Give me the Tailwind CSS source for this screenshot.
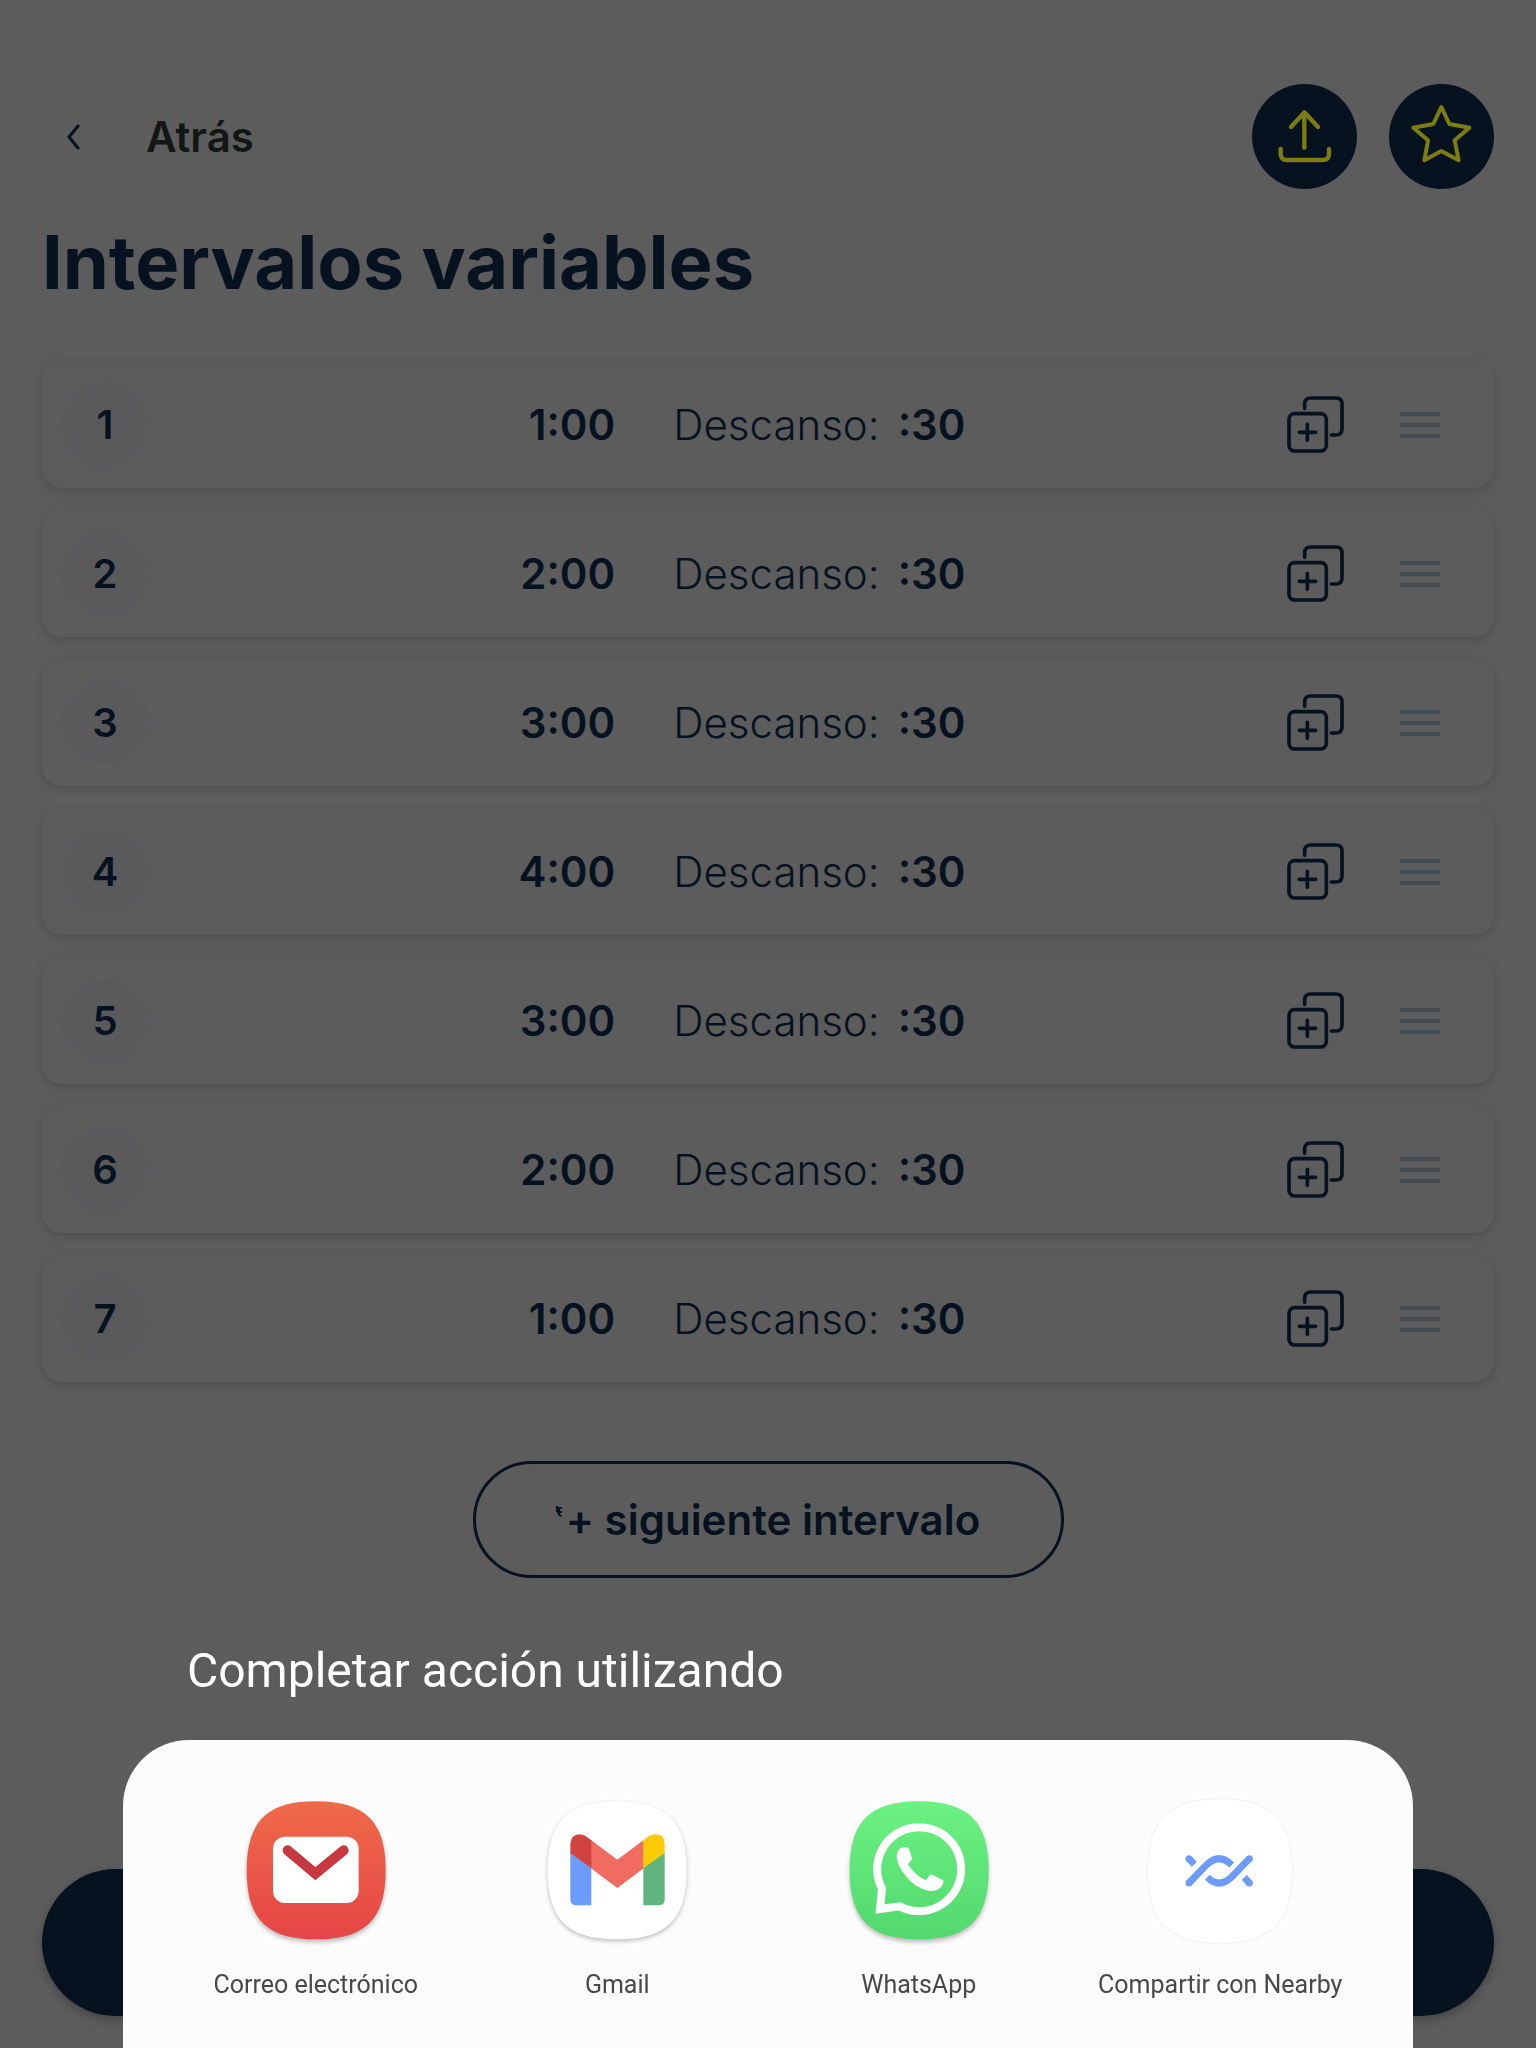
<!DOCTYPE html>
<html lang="es">
<head>
  <meta charset="UTF-8">
  <meta name="viewport" content="width=device-width, initial-scale=1.0">
  <title>Intervalos variables</title>
  <script src="https://cdn.jsdelivr.net/npm/@tailwindcss/browser@4"></script>
</head>
<body class="bg-[#5c5c5c] text-[#06121f] font-['Inter',sans-serif]">

  <main class="min-h-screen flex flex-col px-[42px] pt-[84px] pb-8">
    <!-- Top bar -->
    <header class="flex items-center justify-between">
      <a href="#" class="flex items-center gap-[66px] pl-6 text-[42px] leading-[50px] font-semibold text-[#121715]">
        <svg class="w-[14px] h-[26px]" viewBox="0 0 14 26" fill="none" stroke="#06121f" stroke-width="3" stroke-linecap="round" stroke-linejoin="round"><path d="M12 2L3 13l9 11"/></svg>
        Atrás
      </a>
      <div class="flex gap-8">
        <button type="button" aria-label="Compartir" class="size-[105px] rounded-full bg-[#06121f]">
          <svg class="size-full" viewBox="156 72 315 315" fill="none" stroke="#7c7d0e" stroke-width="13" stroke-linecap="round" stroke-linejoin="round"><path d="M313 157V263M273 201l40-44 41 44M242 267v14q0 19 19 19h107q19 0 19-19v-14"/></svg>
        </button>
        <button type="button" aria-label="Favorito" class="size-[105px] rounded-full bg-[#06121f]">
          <svg class="size-full" viewBox="567 72 315 315" fill="none" stroke="#7c7d0e" stroke-width="12" stroke-linejoin="round"><path d="M724 141l24 51 60 11-44 38 12 60-52-28-51 28 11-60-44-38 60-11z"/></svg>
        </button>
      </div>
    </header>

    <h1 class="mt-[29px] text-[74px] leading-[88px] font-bold">Intervalos variables</h1>

    <!-- Interval rows, filled by the script below -->
    <ol id="intervals" class="mt-[55px] flex flex-col gap-[22px]"></ol>

    <button type="button" class="mt-[79px] self-center flex items-center justify-center gap-1 w-[591px] h-[117px] rounded-full border-3 border-[#06121f] text-[42px] leading-[50px] font-semibold">
      <svg class="w-[6px] h-[12px] -translate-y-2" viewBox="0 0 6 12" fill="#06121f"><path d="M0 0h2v1h4v2H4v2h2v2H4q0 2 2 3v1Q1 10 1 6H0z"/></svg>
      + siguiente intervalo
    </button>

    <button type="button" aria-label="Empezar" class="mt-auto h-[147px] w-full rounded-full bg-[#06121f] shadow-[0_4px_10px_rgba(0,0,0,0.25)]"></button>
  </main>

  <!-- Share sheet -->
  <section role="dialog" aria-labelledby="sheet-title" class="fixed bottom-0 inset-x-0 px-[123px] font-['Roboto',sans-serif]">
    <h2 id="sheet-title" class="pl-16 mb-[39px] text-[48px] leading-[60px] text-white">Completar acción utilizando</h2>
    <div class="grid grid-cols-4 h-[308px] px-[42px] pt-[58px] rounded-t-[66px] bg-[#fcfcfc] text-[25px] leading-8 text-[#484848]">
      <button type="button" class="flex flex-col items-center gap-[25px] self-start">
        <svg class="size-[146px] drop-shadow-[0_3px_2px_rgba(0,0,0,0.25)]" viewBox="67 53 438 438">
          <defs><linearGradient id="mail-bg" x2="0" y2="1"><stop stop-color="#ef6a49"/><stop offset="1" stop-color="#e54546"/></linearGradient></defs>
          <path fill="url(#mail-bg)" d="M78 270C78 123 139 63 286 63S495 123 495 270 434 477 286 477 78 417 78 270z"/>
          <rect x="157" y="169" width="257" height="199" rx="36" fill="#fff"/>
          <path d="M201 210l83 70 85-70" fill="none" stroke="#c8393f" stroke-width="30" stroke-linecap="round"/>
        </svg>
        Correo electrónico
      </button>
      <button type="button" class="flex flex-col items-center gap-[25px] self-start">
        <svg class="size-[146px] drop-shadow-[0_2px_2px_rgba(0,0,0,0.25)]" viewBox="71 53 438 438">
          <path fill="#fff" d="M82 270C82 123 143 63 290 63S499 123 499 270 438 477 290 477 82 417 82 270z"/>
          <path fill="#6c9bfb" d="M150 216l63 46v113h-45q-18 0-18-18z"/>
          <path fill="#5fb57b" d="M369 262l64-46v141q0 18-18 18h-46z"/>
          <path fill="#f16b60" d="M212 179l79 59 79-59v85l-79 59-79-59z"/>
          <path fill="#d0433f" d="M150 218v-28q2-28 30-28 12 1 23 10l10 8v84z"/>
          <path fill="#fdcb04" d="M369 180l14-11q11-7 22-7 28 0 28 28v28l-64 46z"/>
        </svg>
        Gmail
      </button>
      <button type="button" class="flex flex-col items-center gap-[25px] self-start">
        <svg class="size-[146px] drop-shadow-[0_3px_2px_rgba(0,0,0,0.25)]" viewBox="74 53 438 438">
          <defs><linearGradient id="chat-bg" x2="0" y2="1"><stop stop-color="#6bf281"/><stop offset="1" stop-color="#52d86e"/></linearGradient></defs>
          <path fill="url(#chat-bg)" d="M85 270C85 123 146 63 293 63S502 123 502 270 441 477 293 477 85 417 85 270z"/>
          <path fill="none" stroke="#fff" stroke-width="24" d="M182 325A126 126 0 1 1 235 378L176 386z"/>
          <path fill="#fff" d="M226 226Q230 200 250 200q11 0 14 8l9 27-13 17q20 33 53 48l15-18q3 0 38 18 2 8-4 17-13 17-38 15-42-9-68-42-30-35-30-64z"/>
        </svg>
        WhatsApp
      </button>
      <button type="button" class="flex flex-col items-center gap-[25px] self-start whitespace-nowrap">
        <svg class="size-[146px]" viewBox="199 236 438 438">
          <path fill="#fff" stroke="#f0f0f0" stroke-width="3" d="M201 455C201 302 264 238 418 238S635 302 635 455 572 672 418 672 201 608 201 455z"/>
          <g fill="none" stroke="#6c9bfb" stroke-width="21">
            <path d="M325 418l16 17M325 491l53-55q38-36 75 1M506 418l-53 55q-38 36-73 1M506 491l-15-17"/>
          </g>
          <g fill="#6c9bfb"><circle cx="325" cy="418" r="10.500"/><circle cx="325" cy="491" r="10.500"/><circle cx="506" cy="418" r="10.500"/><circle cx="506" cy="491" r="10.500"/></g>
        </svg>
        Compartir con Nearby
      </button>
    </div>
  </section>

  <script>
    const intervals = [
      { work: '1:00', rest: ':30' },
      { work: '2:00', rest: ':30' },
      { work: '3:00', rest: ':30' },
      { work: '4:00', rest: ':30' },
      { work: '3:00', rest: ':30' },
      { work: '2:00', rest: ':30' },
      { work: '1:00', rest: ':30' },
    ];

    document.getElementById('intervals').innerHTML = intervals.map((item, i) => `
      <li class="flex items-center h-[127px] pl-[21px] pr-[54px] rounded-[20px] bg-[#5c5c5c] text-[42px] leading-[50px] shadow-[0_3px_8px_rgba(0,0,0,0.15)]">
        <span class="flex items-center justify-center size-[84px] mr-2 rounded-full bg-[#5a5a5d] text-[40px] font-semibold">${i + 1}</span>
        <span class="flex-3 text-right font-semibold">${item.work}</span>
        <span class="flex-4 flex gap-[18px] pl-[58px] font-light">Descanso: <b class="font-semibold">${item.rest}</b></span>
        <button type="button" aria-label="Duplicar" class="mr-14">
          <svg class="size-[57px]" viewBox="0 0 171 171" fill="none" stroke="#06121f" stroke-width="11" stroke-linecap="round"><rect x="6" y="53" width="112" height="112" rx="17"/><path d="M53 37V24q0-18 18-18h76q18 0 18 18v75q0 18-18 18h-14M61 85v48M37 109h49"/></svg>
        </button>
        <button type="button" aria-label="Mover">
          <svg class="w-[40px] h-[26px]" viewBox="0 0 40 26" stroke="#434b53" stroke-width="4"><path d="M0 2h40M0 13h40M0 24h40"/></svg>
        </button>
      </li>`).join('');
  </script>

</body>
</html>
